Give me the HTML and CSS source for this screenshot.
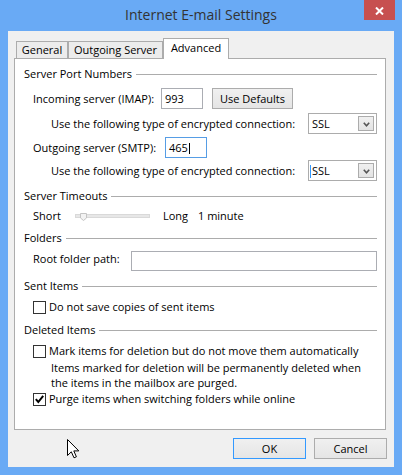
FILE: index.html
```html
<!DOCTYPE html>
<html>
<head>
<meta charset="utf-8">
<title>Internet E-mail Settings</title>
<link rel="stylesheet" href="styles.css">
</head>
<body>
<div class="window">
  <div class="titlebar">
    <div class="title">Internet E-mail Settings</div>
  </div>
  <div class="close" aria-label="Close">
    <svg width="9" height="8" viewBox="0 0 9 8"><path d="M1 0.5 L8 7.5 M8 0.5 L1 7.5" stroke="#fff" stroke-width="2" fill="none"/></svg>
  </div>
  <div class="client">
    <div class="tabs">
      <div class="tab tab-general">General</div>
      <div class="tab tab-outgoing">Outgoing Server</div>
      <div class="tab tab-advanced">Advanced</div>
    </div>
    <div class="panel">
      <div class="group-title gt-ports">Server Port Numbers</div>
      <div class="row row-incoming">
        <span class="label label-incoming">Incoming server (IMAP):</span>
        <div class="textbox port">993</div>
        <div class="button btn-defaults">Use Defaults</div>
      </div>
      <div class="row row-enc row-enc1">
        <span>Use the following type of encrypted connection:</span>
        <div class="select">
          <span class="select-value">SSL</span>
          <span class="select-arrow"><svg width="7" height="5" viewBox="0 0 7 5"><path d="M0.8 0.8 L3.5 3.8 L6.2 0.8" stroke="#555" stroke-width="1.6" fill="none"/></svg></span>
        </div>
      </div>
      <div class="row row-outgoing">
        <span class="label label-outgoing">Outgoing server (SMTP):</span>
        <div class="textbox port focused">465<span class="caret"></span></div>
      </div>
      <div class="row row-enc row-enc2">
        <span>Use the following type of encrypted connection:</span>
        <div class="select">
          <span class="select-value"><span class="select-caret"></span>SSL</span>
          <span class="select-arrow"><svg width="7" height="5" viewBox="0 0 7 5"><path d="M0.8 0.8 L3.5 3.8 L6.2 0.8" stroke="#555" stroke-width="1.6" fill="none"/></svg></span>
        </div>
      </div>

      <div class="group-title gt-timeouts">Server Timeouts</div>
      <div class="row row-slider">
        <span class="label-short">Short</span>
        <div class="slider">
          <svg class="thumb" width="7" height="8" viewBox="0 0 7 8"><path d="M0.5 0.5 H6.5 V5 L3.5 7.5 L0.5 5 Z" fill="#f2f2f2" stroke="#c4c4c4" stroke-width="1"/></svg>
        </div>
        <span class="label-long">Long</span>
        <span>1 minute</span>
      </div>

      <div class="group-title gt-folders">Folders</div>
      <div class="row row-root">
        <span class="label label-root">Root folder path:</span>
        <div class="textbox root-path"></div>
      </div>

      <div class="group-title gt-sent">Sent Items</div>
      <div class="row row-check row-check1">
        <span class="checkbox"></span>
        <span>Do not save copies of sent items</span>
      </div>

      <div class="group-title gt-deleted">Deleted Items</div>
      <div class="row row-check row-check2">
        <span class="checkbox"></span>
        <span>Mark items for deletion but do not move them automatically</span>
      </div>
      <div class="desc">Items marked for deletion will be permanently deleted when<br>the items in the mailbox are purged.</div>
      <div class="row row-check row-check3">
        <span class="checkbox checked"><svg width="11" height="11" viewBox="0 0 11 11"><path d="M1.8 5.2 L4.3 8 L9.2 1.8" stroke="#000" stroke-width="2" fill="none"/></svg></span>
        <span>Purge items when switching folders while online</span>
      </div>
    </div>
    <div class="footer">
      <div class="button btn-dialog btn-ok">OK</div>
      <div class="button btn-dialog">Cancel</div>
    </div>
  </div>
  <svg class="cursor" width="13" height="20" viewBox="0 0 13 20"><path d="M0.5 0.5 L0.5 16.5 L4.3 12.8 L7 18.8 L9.4 17.8 L6.8 11.9 L11.8 11.9 Z" fill="#fff" stroke="#000" stroke-width="1" stroke-linejoin="miter"/></svg>
</div>
</body>
</html>
```

FILE: styles.css
```css
* {
  box-sizing: border-box;
}

html,
body {
  margin: 0;
  padding: 0;
}

body {
  width: 402px;
  height: 475px;
  overflow: hidden;
  background: #69aaf5;
  font-family: "Open Sans", "Noto Sans", sans-serif;
  font-size: 11px;
  line-height: 15px;
  color: #000;
}

.window {
  position: relative;
  width: 402px;
  height: 475px;
  padding: 0 8px 8px 8px;
  display: flex;
  flex-direction: column;
}

.titlebar {
  height: 31px;
  padding-top: 5px;
}

.title {
  text-align: center;
  font-size: 14px;
  line-height: 19px;
  color: #333;
}

.close {
  position: absolute;
  top: 0;
  right: 7px;
  width: 31px;
  height: 20px;
  background: #c75050;
  display: flex;
  align-items: center;
  justify-content: center;
  padding-top: 1px;
}

.close svg {
  display: block;
}

.client {
  flex: 1;
  background: #f0f0f0;
  padding: 7px 8px 0 6px;
}

/* Tabs */
.tabs {
  position: relative;
  z-index: 1;
  display: flex;
  align-items: flex-end;
  height: 20px;
  margin-left: 2px;
}

.tab {
  height: 17px;
  border: 1px solid #acacac;
  border-bottom: none;
  background: #ececec;
  text-align: center;
  line-height: 15px;
  white-space: nowrap;
}

.tab-general {
  width: 52px;
}

.tab-outgoing {
  width: 95px;
}

.tab-advanced {
  width: 66px;
  height: 21px;
  margin-bottom: -1px;
  padding-top: 1px;
  background: #fff;
}

/* Panel */
.panel {
  height: 372px;
  background: #fff;
  border: 1px solid #acacac;
  padding: 7px 8px 0 9px;
}

.group-title {
  display: flex;
  height: 15px;
  white-space: nowrap;
}

.group-title::after {
  content: "";
  flex: 1;
  height: 1px;
  margin: 8px 0 0 4px;
  background: #acacac;
}

.gt-timeouts,
.gt-folders,
.gt-sent {
  margin-top: 7px;
}

.gt-deleted {
  margin-top: 8px;
}

.row {
  display: flex;
  align-items: center;
  padding-left: 9px;
  white-space: nowrap;
}

.row-incoming {
  margin-top: 7px;
  height: 21px;
}

.row-enc {
  height: 21px;
  padding-left: 27px;
}

.row-enc1 {
  margin-top: 4px;
}

.row-outgoing {
  margin-top: 3px;
  height: 21px;
}

.row-enc2 {
  margin-top: 2px;
}

.label-incoming {
  width: 128px;
}

.label-outgoing {
  width: 132px;
}

.label-root {
  width: 98px;
}

.textbox {
  height: 21px;
  border: 1px solid #abadb3;
  background: #fff;
  padding: 0 3px;
  line-height: 19px;
}

.port {
  width: 42px;
}

.textbox.focused {
  border-color: #569de5;
}

.caret {
  display: inline-block;
  width: 1px;
  height: 11px;
  background: #000;
  margin-left: 1px;
  vertical-align: -2px;
}

.button {
  height: 21px;
  border: 1px solid #acacac;
  background: linear-gradient(#f0f0f0, #e5e5e5);
  text-align: center;
  line-height: 19px;
  white-space: nowrap;
}

.btn-defaults {
  width: 81px;
  margin-left: 9px;
}

.select {
  margin-left: auto;
  width: 69px;
  height: 21px;
  border: 1px solid #acacac;
  background: #fff;
  display: flex;
  align-items: center;
  padding: 0 2px 0 3px;
}

.select-value {
  flex: 1;
  line-height: 15px;
}

.select-caret {
  display: inline-block;
  width: 1px;
  height: 13px;
  background: #3399ff;
  margin-left: -2px;
  margin-right: 1px;
  vertical-align: -3px;
}

.select-arrow {
  width: 16px;
  height: 15px;
  border: 1px solid #acacac;
  background: linear-gradient(#f0f0f0, #e3e3e3);
  display: flex;
  align-items: center;
  justify-content: center;
  padding-top: 1px;
}

.select-arrow svg {
  display: block;
}

/* Slider */
.row-slider {
  margin-top: 5px;
  height: 15px;
}

.label-short {
  width: 42px;
}

.slider {
  position: relative;
  width: 75px;
  height: 4px;
  border: 1px solid #d9d9d9;
  background: #e7e7e7;
  margin-right: 13px;
}

.thumb {
  position: absolute;
  left: 4px;
  top: -2px;
  display: block;
}

.label-long {
  width: 35px;
}

/* Folders */
.row-root {
  margin-top: 6px;
  height: 20px;
  align-items: flex-start;
}

.root-path {
  flex: 1;
  height: 20px;
}

/* Checkboxes */
.row-check {
  height: 15px;
  align-items: flex-start;
}

.row-check1,
.row-check2 {
  margin-top: 6px;
}

.row-check3 {
  margin-top: 1px;
}

.checkbox {
  flex: none;
  width: 13px;
  height: 13px;
  margin: 2px 3px 0 0;
  border: 1px solid #333;
  background: #fff;
}

.checkbox svg {
  display: block;
}

.desc {
  margin-top: 2px;
  padding-left: 27px;
  line-height: 15px;
  white-space: nowrap;
}

/* Footer */
.footer {
  display: flex;
  justify-content: flex-end;
  gap: 8px;
  margin-top: 8px;
  margin-right: -1px;
}

.btn-dialog {
  width: 73px;
}

.btn-ok {
  border-color: #3399ff;
}

.cursor {
  position: absolute;
  left: 67px;
  top: 439px;
  display: block;
}
```
